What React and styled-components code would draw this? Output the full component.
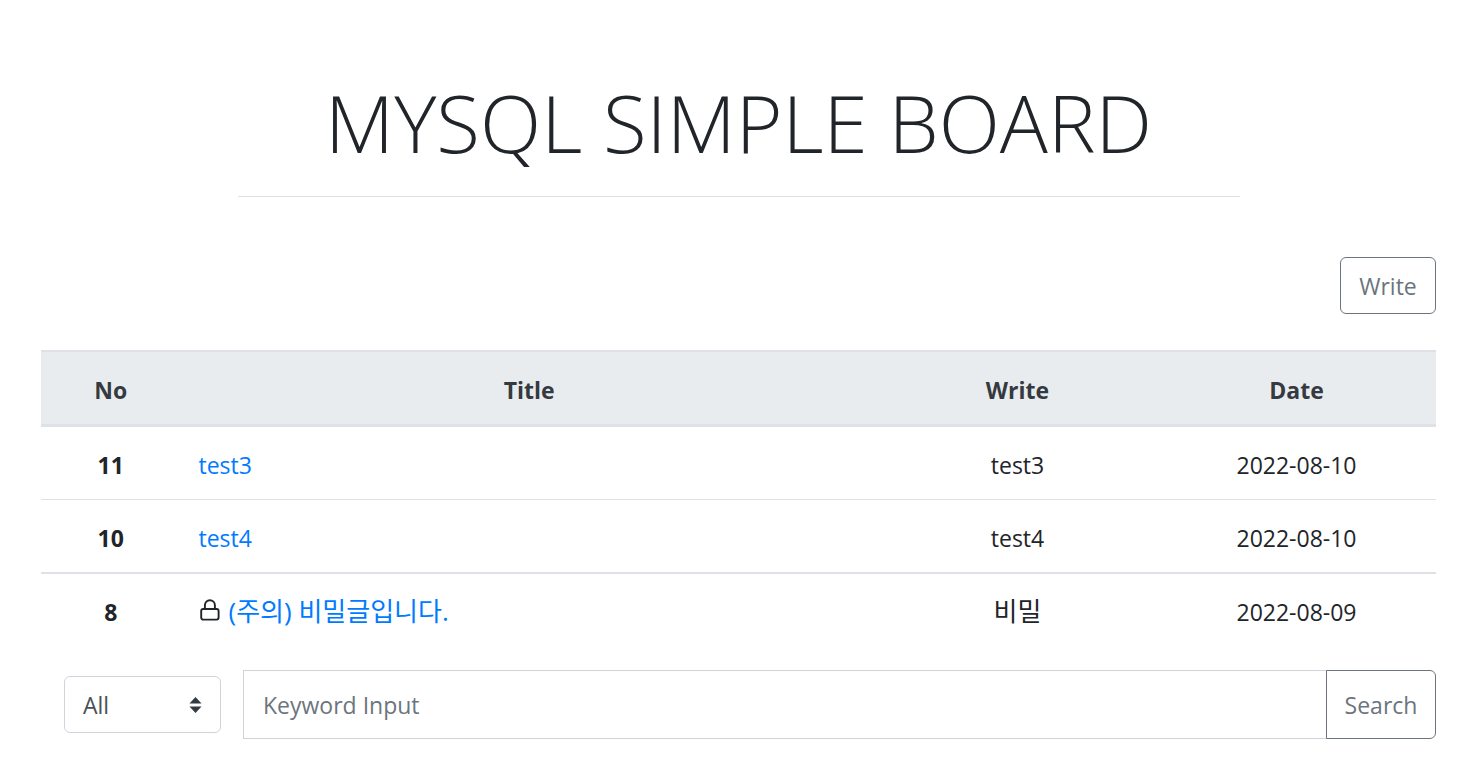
import React from "react";
import styled, { createGlobalStyle } from "styled-components";

const GlobalStyle = createGlobalStyle`
  *, *::before, *::after { box-sizing: border-box; }
  body {
    margin: 0;
    background: #fff;
    color: #212529;
    font-family: "Open Sans", "Noto Sans CJK KR", sans-serif;
    font-size: 23px;
    line-height: 36px;
  }
  button, input, select { font: inherit; margin: 0; }
`;

const Page = styled.main`
  padding: 70px 41px 28px;
`;

const Header = styled.header`
  max-width: 1002px;
  margin: 0 auto;
  padding-bottom: 22px;
  border-bottom: 1px solid #e0e0e0;
  text-align: center;
`;

const Heading = styled.h1`
  margin: 0;
  font-size: 80px;
  font-weight: 300;
  line-height: 104px;
  white-space: nowrap;
`;

const Toolbar = styled.div`
  display: flex;
  justify-content: flex-end;
  padding: 60px 0 36px;
`;

const OutlineButton = styled.button`
  padding: 10px 17px 9px;
  border: 1px solid #6c757d;
  border-radius: ${(p) => (p.$attached ? "0 6px 6px 0" : "6px")};
  background: #fff;
  color: #6c757d;
  min-width: ${(p) => (p.$attached ? "110px" : "96px")};
  margin-left: ${(p) => (p.$attached ? "-1px" : "0")};
  text-align: center;
`;

const Board = styled.table`
  width: 100%;
  table-layout: fixed;
  border-collapse: separate;
  border-spacing: 0;
`;

const HeadCell = styled.th`
  width: ${(p) => p.$width};
  padding: 20px 18px 16px;
  border-top: 2px solid #dee2e6;
  border-bottom: 3px solid #dee2e6;
  background: #e9ecef;
  color: #343a40;
  font-weight: 700;
`;

const Row = styled.tr`
  & > * {
    height: ${(p) => 72 + p.$line}px;
    padding: 19px 18px 16px;
    border-bottom: ${(p) => p.$line}px solid #dee2e6;
    text-align: center;
  }
  & > td:nth-child(2) { text-align: left; }
`;

const Korean = styled.span`
  font-size: 26px;
  line-height: 32px;
`;

const PostLink = styled.a`
  color: #007bff;
  text-decoration: none;
`;

const Lock = styled.svg`
  width: 20px;
  height: 22px;
  margin: 0 9px 0 1px;
`;

const SearchForm = styled.form`
  display: flex;
  align-items: center;
  gap: 22px;
  padding: 24px 0 0 23px;
`;

const SelectBox = styled.div`
  position: relative;
  flex: 0 0 157px;
`;

const Select = styled.select`
  display: block;
  width: 100%;
  height: 57px;
  padding: 1px 42px 0 18px;
  border: 1px solid #ced4da;
  border-radius: 6px;
  background: #fff;
  color: #495057;
  appearance: none;
`;

const Caret = styled.svg`
  position: absolute;
  right: 19px;
  top: 50%;
  width: 13px;
  height: 16px;
  transform: translateY(-50%);
  pointer-events: none;
`;

const InputGroup = styled.div`
  display: flex;
  flex: 1;
  height: 69px;
`;

const Keyword = styled.input`
  flex: 1;
  min-width: 0;
  padding: 1px 19px 0;
  border: 1px solid #ced4da;
  border-radius: 0;
  color: #495057;
  &::placeholder { color: #6c757d; opacity: 1; }
`;

const columns = [
  { label: "No", width: "10%" },
  { label: "Title", width: "50%" },
  { label: "Write", width: "20%" },
  { label: "Date", width: "20%" },
];

const posts = [
  { no: 11, title: "test3", writer: "test3", date: "2022-08-10", line: 1 },
  { no: 10, title: "test4", writer: "test4", date: "2022-08-10", line: 2 },
  { no: 8, title: "(주의) 비밀글입니다.", writer: "비밀", date: "2022-08-09", line: 0, secret: true },
];

const hangul = /[가-힣]/;

function Text({ children }) {
  return hangul.test(children) ? <Korean lang="ko">{children}</Korean> : children;
}

export default function App() {
  return (
    <Page>
      <GlobalStyle />
      <Header>
        <Heading>MYSQL SIMPLE BOARD</Heading>
      </Header>
      <Toolbar>
        <OutlineButton type="button">Write</OutlineButton>
      </Toolbar>
      <Board>
        <thead>
          <tr>
            {columns.map((c) => (
              <HeadCell key={c.label} scope="col" $width={c.width}>{c.label}</HeadCell>
            ))}
          </tr>
        </thead>
        <tbody>
          {posts.map((p) => (
            <Row key={p.no} $line={p.line}>
              <th scope="row">{p.no}</th>
              <td>
                {p.secret && (
                  <Lock viewBox="0 0 20 22" fill="none" stroke="#212529" strokeWidth="1.9" aria-hidden="true">
                    <rect x="1.2" y="10" width="17.4" height="10.6" rx="2" />
                    <path d="M4.9 10V6.2a5 5 0 0 1 10 0V10" />
                  </Lock>
                )}
                <PostLink href="#"><Text>{p.title}</Text></PostLink>
              </td>
              <td><Text>{p.writer}</Text></td>
              <td>{p.date}</td>
            </Row>
          ))}
        </tbody>
      </Board>
      <SearchForm onSubmit={(e) => e.preventDefault()}>
        <SelectBox>
          <Select aria-label="Search field" defaultValue="All">
            <option>All</option>
            <option>Title</option>
            <option>Write</option>
          </Select>
          <Caret viewBox="0 0 13 16" fill="#343a40" aria-hidden="true">
            <path d="M0.5 6.5 6.5 0l6 6.5zM0.5 9.5l6 6.5 6-6.5z" />
          </Caret>
        </SelectBox>
        <InputGroup>
          <Keyword type="text" aria-label="Keyword" placeholder="Keyword Input" />
          <OutlineButton type="submit" $attached>Search</OutlineButton>
        </InputGroup>
      </SearchForm>
    </Page>
  );
}
